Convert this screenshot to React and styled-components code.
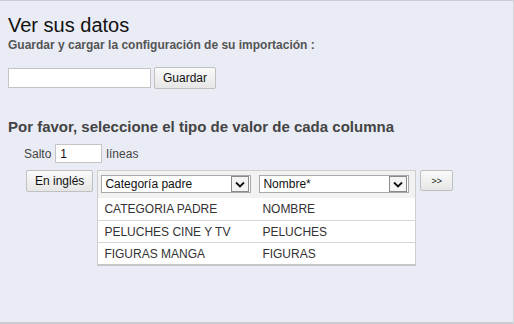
import React from 'react'
import styled, { createGlobalStyle } from 'styled-components'

const GlobalStyle = createGlobalStyle`
    html, body {
        margin: 0;
        padding: 0;
        background: #e9ecf4;
    }
    body {
        font-family: "Liberation Sans", Arial, sans-serif;
        font-size: 12px;
        color: #333;
    }
`

const Page = styled.div`
    box-sizing: border-box;
    width: 514px;
    height: 324px;
    border-top: 1px solid #c9ccd3;
    border-right: 1px solid #d4d7de;
    border-bottom: 2px solid #c9ccd3;
    padding: 13px 8px 0 8px;
    overflow: hidden;
`

const Title = styled.h1`
    margin: 0;
    font-size: 20px;
    font-weight: normal;
    color: #111;
    line-height: 23px;
`

const Subtitle = styled.div`
    font-size: 12px;
    font-weight: bold;
    color: #555;
    margin-top: 1px;
    line-height: 15px;
`

const SaveRow = styled.div`
    display: flex;
    align-items: center;
    gap: 3px;
    margin-top: 14px;
`

const TextInput = styled.input`
    box-sizing: border-box;
    width: ${p => p.$w}px;
    height: ${p => p.$h || 20}px;
    border: 1px solid #c4c4c4;
    background: #fff;
    padding: 0 4px;
    font-family: inherit;
    font-size: 12px;
    color: #111;
    outline: none;
`

const Button = styled.button`
    box-sizing: border-box;
    height: ${p => p.$h || 22}px;
    padding: 0 ${p => p.$px || 8}px;
    border: 1px solid #c0c0c0;
    border-radius: 2px;
    background: linear-gradient(#fafafa, #e6e6e6);
    font-family: inherit;
    font-size: ${p => p.$fs || 12}px;
    color: #111;
    cursor: pointer;
`

const SectionTitle = styled.h2`
    margin: 29px 0 0 0;
    font-size: 15px;
    font-weight: bold;
    color: #444;
    line-height: 18px;
`

const SkipRow = styled.div`
    display: flex;
    align-items: center;
    gap: 4px;
    margin: 8px 0 0 16px;
    color: #444;
`

const MapRow = styled.div`
    display: flex;
    align-items: flex-start;
    gap: 4px;
    margin: 7px 0 0 18px;
`

const Panel = styled.div`
    width: 319px;
    background: #fff;
    border: 1px solid #cfcfcf;
    border-bottom: 2px solid #c6c6c6;
    box-sizing: border-box;
`

const HeadRow = styled.div`
    display: grid;
    grid-template-columns: 150px 150px;
    gap: 8px;
    padding: 4px 3px 5px 3px;
    background: #f2f2f2;
`

const Select = styled.div`
    box-sizing: border-box;
    height: 18px;
    display: flex;
    align-items: center;
    justify-content: space-between;
    border: 1px solid #a9a9a9;
    background: #fff;
    padding-left: 3px;
    font-size: 12px;
    color: #111;
`

const Caret = styled.span`
    box-sizing: border-box;
    width: 18px;
    height: 16px;
    margin-right: 1px;
    border: 1px solid #8a8a8a;
    background: #f4f4f4;
    display: flex;
    align-items: center;
    justify-content: center;
`

const DataRow = styled.div`
    display: grid;
    grid-template-columns: 158px 1fr;
    height: 22px;
    align-items: center;
    padding-left: 6px;
    font-size: 12px;
    color: #333;
    border-top: ${p => (p.$first ? 'none' : '1px solid #d6d6d6')};
    box-sizing: border-box;
`

const rows = [
    ['CATEGORIA PADRE', 'NOMBRE'],
    ['PELUCHES CINE Y TV', 'PELUCHES'],
    ['FIGURAS MANGA', 'FIGURAS'],
]

const Chevron = () => (
    <svg width="10" height="7" viewBox="0 0 10 7">
        <path d="M1 1.5 L5 5.5 L9 1.5" fill="none" stroke="#111" strokeWidth="1.8" />
    </svg>
)

export default function App() {
    return (
        <Page>
            <GlobalStyle />
            <Title>Ver sus datos</Title>
            <Subtitle>Guardar y cargar la configuración de su importación :</Subtitle>
            <SaveRow>
                <TextInput $w={143} />
                <Button $px={8}>Guardar</Button>
            </SaveRow>
            <SectionTitle>Por favor, seleccione el tipo de valor de cada columna</SectionTitle>
            <SkipRow>
                <span>Salto</span>
                <TextInput $w={47} $h={19} defaultValue="1" />
                <span>líneas</span>
            </SkipRow>
            <MapRow>
                <Button $h={22} $px={8}>En inglés</Button>
                <Panel>
                    <HeadRow>
                        <Select>Categoría padre<Caret><Chevron /></Caret></Select>
                        <Select>Nombre*<Caret><Chevron /></Caret></Select>
                    </HeadRow>
                    {rows.map((r, i) => (
                        <DataRow key={i} $first={i === 0}>
                            <span>{r[0]}</span>
                            <span>{r[1]}</span>
                        </DataRow>
                    ))}
                </Panel>
                <Button $h={21} $px={10} $fs={9}>&gt;&gt;</Button>
            </MapRow>
        </Page>
    )
}
